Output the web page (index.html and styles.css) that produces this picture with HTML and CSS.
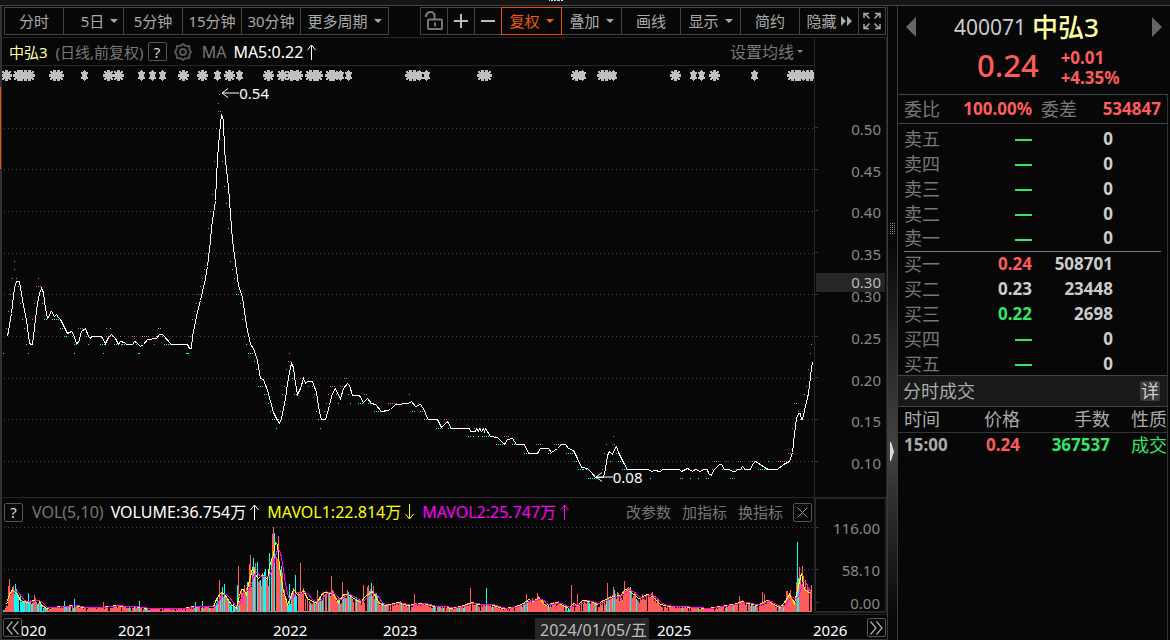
FILE: index.html
```html
<!DOCTYPE html>
<html lang="zh-CN">
<head>
<meta charset="utf-8">
<title>中弘3 400071</title>
<link rel="stylesheet" href="styles.css">
</head>
<body>
<div class="strip"><svg width="16" height="2" shape-rendering="crispEdges"><path d="M0 0h1v1h-1zM2 0h2v1h-2zM5 0h2v1h-2zM8 0h3v1h-3zM12 0h2v1h-2z" fill="#ddd"/></svg></div>
<div class="app">
  <main class="main">
    <nav class="toolbar">
      <div class="group">
        <button class="tool">分时</button>
        <button class="tool drop day">5日</button>
        <button class="tool">5分钟</button>
        <button class="tool">15分钟</button>
        <button class="tool">30分钟</button>
        <button class="tool drop wide">更多周期</button>
      </div>
      <div class="group">
        <button class="tool icon" aria-label="解锁"><svg width="20" height="20" viewBox="0 0 20 20" fill="none" stroke="#777" stroke-width="2"><path d="M2 6a4.500 4.500 0 0 1 8.500-2.500V8"/><rect x="4" y="8.500" width="14" height="9.500" rx="1"/><path d="M11 11.500v4"/></svg></button>
        <button class="tool icon" aria-label="放大"><svg width="14" height="14" viewBox="0 0 14 14" fill="none" stroke="#bbb" stroke-width="2"><path d="M0 7h14M7 0v14"/></svg></button>
        <button class="tool icon" aria-label="缩小"><svg width="14" height="14" viewBox="0 0 14 14" fill="none" stroke="#bbb" stroke-width="2"><path d="M0 7h14"/></svg></button>
        <button class="tool drop active">复权</button>
        <button class="tool drop">叠加</button>
        <button class="tool">画线</button>
        <button class="tool drop">显示</button>
        <button class="tool">简约</button>
        <button class="tool hide">隐藏<svg width="11" height="10" viewBox="0 0 11 10" fill="#aaa"><path d="M0 0l5 5-5 5zM6 0l5 5-5 5z"/></svg></button>
        <button class="tool icon" aria-label="全屏"><svg width="18" height="18" viewBox="0 0 18 18" fill="none" stroke="#aaa" stroke-width="1.500"><path d="M1 6V1.500h5M1.500 1.500l5 5M12 1.500h5V6M16.500 1.500l-5 5M1 12v4.500h5M1.500 16.500l5-5M12 16.500h5V12M16.500 16.500l-5-5"/></svg></button>
      </div>
    </nav>
    <div class="panes">
      <section class="pane">
        <header class="head">
          <span class="stock">中弘3</span>
          <span class="muted">(日线,前复权)</span>
          <button class="box" aria-label="帮助">?</button>
          <svg class="gear" width="18" height="18" viewBox="0 0 18 18" fill="none" stroke="#555" stroke-width="2"><path d="M9 1l2.500 1.800 3.500.2.500 3.500L17 9l-1.500 2.500-.500 3.500-3.500.2L9 17l-2.500-1.800-3.500-.2-.500-3.500L1 9l1.500-2.500L3 3l3.500-.2z"/><circle cx="9" cy="9" r="3"/></svg>
          <span class="muted ma">MA</span>
          <span class="value">MA5:0.22<svg class="arrow" viewBox="0 0 9 16"><path d="M4.500 16V1M0.500 6l4-5 4 5"/></svg></span>
          <button class="setting">设置均线<i></i></button>
        </header>
        <div class="plot">
          <svg id="price" viewBox="2 66 812 431" preserveAspectRatio="none" shape-rendering="crispEdges">
            <defs>
              <path id="star" d="M-3-3h2v-2h2v2h2v-1h1v1h-1v2h2v2h-2v2h1v1h-1v-1h-2v2h-2v-2h-2v1h-1v-1h1v-2h-2v-2h2v-2h-1v-1h1z"/>
              <path id="bolt" d="M0-5h1v1h1v1h2v2h-1v3h1v2h-2v1h-1v1h-1v-1h-1v-1h-2v-2h1v-3h-1v-2h2v-1h1z"/>
            </defs>
          </svg>
          <span class="note high"><svg width="18" height="10" viewBox="0 0 18 10"><path d="M18 5H1M7 0.500L1 5l6 4.500"/></svg>0.54</span>
          <span class="note low"><svg width="18" height="10" viewBox="0 0 18 10"><path d="M18 5H1M7 0.500L1 5l6 4.500"/></svg>0.08</span>
        </div>
      </section>
      <aside class="scale prices">
        <span>0.50</span><span>0.45</span><span>0.40</span><span>0.35</span><span>0.30</span><span>0.25</span><span>0.20</span><span>0.15</span><span>0.10</span>
        <b class="cursor">0.30</b>
      </aside>
      <section class="pane vol">
        <header class="head">
          <button class="box" aria-label="帮助">?</button>
          <span class="muted">VOL(5,10)</span>
          <span class="value">VOLUME:36.754万<svg class="arrow" viewBox="0 0 9 16"><path d="M4.500 16V1M0.500 6l4-5 4 5"/></svg></span>
          <span class="value yellow">MAVOL1:22.814万<svg class="arrow" viewBox="0 0 9 16"><path d="M4.500 0v15M0.500 10l4 5 4-5"/></svg></span>
          <span class="value magenta">MAVOL2:25.747万<svg class="arrow" viewBox="0 0 9 16"><path d="M4.500 16V1M0.500 6l4-5 4 5"/></svg></span>
          <span class="links"><button>改参数</button><button>加指标</button><button>换指标</button></span>
          <button class="box" aria-label="关闭"><svg width="11" height="11" viewBox="0 0 11 11" stroke="#999"><path d="M0.500 0.500l10 10M10.500 0.500l-10 10"/></svg></button>
        </header>
        <div class="plot"><svg id="volume" viewBox="2 526 812 86" preserveAspectRatio="none" shape-rendering="crispEdges"></svg></div>
      </section>
      <aside class="scale volumes"><span>116.00</span><span>58.10</span><span>0.00</span></aside>
    </div>
    <footer class="timeline">
      <button class="box" aria-label="向前"><svg width="13" height="14" viewBox="0 0 13 14" fill="none" stroke="#aaa" stroke-width="1.300"><path d="M6.500 0.500L1 7l5.500 6.500M12.500 0.500L7 7l5.500 6.500"/></svg></button>
      <div class="years"><span class="first">2020</span><span>2021</span><span>2022</span><span>2023</span><span><b class="date">2024/01/05/五</b></span><span>2025</span><span>2026</span></div>
      <button class="box" aria-label="向后"><svg width="13" height="14" viewBox="0 0 13 14" fill="none" stroke="#aaa" stroke-width="1.300"><path d="M0.500 0.500L6 7l-5.500 6.500M6.500 0.500L12 7l-5.500 6.500"/></svg></button>
    </footer>
  </main>
  <div class="splitter">
    <svg class="grip" width="6" height="11" shape-rendering="crispEdges" fill="#888"><path d="M0 0h1v1H0zM2 0h1v1H2zM4 0h1v1H4zM0 2h1v1H0zM2 2h1v1H2zM4 2h1v1H4zM0 4h1v1H0zM2 4h1v1H2zM4 4h1v1H4zM0 6h1v1H0zM2 6h1v1H2zM4 6h1v1H4zM0 8h1v1H0zM2 8h1v1H2zM4 8h1v1H4zM0 10h1v1H0zM2 10h1v1H2zM4 10h1v1H4z"/></svg>
    <svg class="fold" width="4" height="19" fill="#ddd"><path d="M0 0l1 0 3 9.500-3 9.500H0z"/></svg>
  </div>
  <section class="quote">
    <header class="summary">
      <button class="nav" aria-label="上一只"><svg width="10" height="20" fill="#666"><path d="M10 0v20L0 10z"/></svg></button>
      <div class="ident">
        <h1><span class="code">400071</span> <span class="name">中弘3</span></h1>
        <div class="last"><strong>0.24</strong><p>+0.01<br>+4.35%</p></div>
      </div>
      <button class="nav" aria-label="下一只"><svg width="10" height="20" fill="#666"><path d="M0 0v20L10 10z"/></svg></button>
    </header>
    <div class="body">
      <dl class="ratio"><dt>委比</dt><dd>100.00%</dd><dt>委差</dt><dd>534847</dd></dl>
      <table class="book">
        <tbody>
          <tr><th>卖五</th><td class="down"><i></i></td><td>0</td></tr>
          <tr><th>卖四</th><td class="down"><i></i></td><td>0</td></tr>
          <tr><th>卖三</th><td class="down"><i></i></td><td>0</td></tr>
          <tr><th>卖二</th><td class="down"><i></i></td><td>0</td></tr>
          <tr><th>卖一</th><td class="down"><i></i></td><td>0</td></tr>
        </tbody>
        <tbody class="buy">
          <tr><th>买一</th><td class="up">0.24</td><td>508701</td></tr>
          <tr><th>买二</th><td>0.23</td><td>23448</td></tr>
          <tr><th>买三</th><td class="down">0.22</td><td>2698</td></tr>
          <tr><th>买四</th><td class="down"><i></i></td><td>0</td></tr>
          <tr><th>买五</th><td class="down"><i></i></td><td>0</td></tr>
        </tbody>
      </table>
      <div class="ticktitle"><span>分时成交</span><button>详</button></div>
      <table class="ticks">
        <thead><tr><th>时间</th><th>价格</th><th>手数</th><th>性质</th></tr></thead>
        <tbody><tr><td>15:00</td><td class="up">0.24</td><td class="down">367537</td><td class="down kind">成交</td></tr></tbody>
      </table>
    </div>
  </section>
</div>
<script src="chart.js"></script>
</body>
</html>
```
FILE: styles.css
```css
* { box-sizing: border-box; }
body {
  margin: 0; min-height: 100vh; display: flex; flex-direction: column;
  background: #070707; color: #aaa;
  font: 15px/20px "Noto Sans", "Noto Sans CJK SC", sans-serif;
}
button { background: none; border: 0; padding: 0; margin: 0; color: inherit; font: inherit; white-space: nowrap; }
svg { display: block; flex: none; }
h1, p, dl, dd { margin: 0; font-weight: 400; }
table { border-collapse: collapse; width: 100%; table-layout: fixed; }
th, td { padding: 0; }

.strip { height: 6px; background: #151515; border-bottom: 1px solid #444; padding-left: 549px; }
.app { flex: 1; display: flex; }
.main { flex: 1; min-width: 0; display: flex; flex-direction: column; border-left: 2px solid #333; position: relative; }
.main::before { content: ""; position: absolute; left: -2px; top: 81px; width: 1px; height: 82px; background: #e8500c; }

.toolbar { display: flex; justify-content: space-between; padding: 1px 1px 2px 2px; height: 31px; }
.group { display: flex; }
.tool { width: 60px; height: 28px; border: 1px solid #444; margin-right: -1px; display: flex; align-items: center; justify-content: center; gap: 6px; }
.group .tool:last-child { margin-right: 0; }
.tool.icon { width: 28px; }
.tool.wide { width: 89px; }
.tool.drop:not(.wide) { width: 61px; }
.tool.drop::after { content: ""; border: 4px solid transparent; border-top-color: currentColor; border-bottom: 0; }
.tool.day { padding-left: 12px; }
.tool.active { border-color: #e8500c; color: #f25a10; position: relative; }
.tool.hide { gap: 4px; }

.panes { flex: 1; display: grid; grid-template-columns: 1fr 73px; grid-template-rows: 459px 116px; border-top: 1px solid #262626; border-bottom: 1px solid #262626; }
.pane { display: flex; flex-direction: column; min-width: 0; }
.head { display: flex; align-items: center; height: 27px; padding: 0 11px 0 7px; white-space: nowrap; }
.stock { color: #ffffa0; margin-right: 8px; }
.muted { color: #777; }
.box { width: 19px; height: 19px; border: 1px solid #555; border-radius: 2px; color: #ddd; display: flex; align-items: center; justify-content: center; flex: none; }
.head .box { margin-left: 4px; }
.gear { margin: 0 10px 0 7px; }
.ma { margin-right: 7px; font-size: 16px; }
.value { color: #fff; display: flex; align-items: center; font-size: 16px; }
.arrow { width: 9px; height: 16px; margin-left: 4px; fill: none; stroke: currentColor; }
.setting { margin-left: auto; color: #777; display: flex; align-items: center; gap: 3px; font-size: 16px; }
.setting i { border: 3px solid transparent; border-top-color: #888; border-bottom: 0; }
.plot { flex: 1; min-height: 0; position: relative; border-top: 1px solid #262626; }
.plot > svg { width: 100%; height: 100%; }
.note { position: absolute; display: flex; align-items: center; color: #fff; }
.note svg { fill: none; stroke: #fff; }
.high { left: 27%; top: 4%; }
.low { left: 73%; top: 93%; }

.vol { border-top: 1px solid #262626; }
.vol .plot { border-top: 0; padding-bottom: 1px; }
.vol .head { height: 28px; padding: 0 2px; }
.vol .head .box { margin: 0; }
.vol .muted { margin: 0 7px 0 9px; font-size: 16px; }
.vol .value { margin-right: 8px; }
.vol .value.yellow { color: #ff0; }
.vol .value.magenta { color: #f0f; }
.links { display: flex; gap: 11px; margin: 0 10px 0 auto; color: #777; }

.scale { border: 1px solid #262626; border-width: 0 1px 0 1px; display: flex; flex-direction: column; color: #888; text-align: right; position: relative; }
.scale span { padding-right: 5px; position: relative; }
.prices { padding: 70px 0 13px; }
.prices span { flex: 1; display: flex; align-items: center; justify-content: flex-end; }
.scale span::before { content: ""; position: absolute; left: 0; top: 45%; width: 3px; height: 1px; background: #333; }
.cursor { position: absolute; left: 1px; right: 1px; top: 235px; height: 19px; line-height: 19px; padding-right: 4px; background: #262626; color: #bbb; font-weight: 400; }
.volumes { border-width: 2px; padding: 19px 0 0; gap: 22px; }
.volumes span:last-child { margin-top: -9px; }

.timeline { display: flex; height: 25px; padding: 3px 1px 2px; border-bottom: 1px solid #333; color: #fff; }
.timeline .box { position: relative; z-index: 1; background: #070707; }
.years { flex: 1; min-width: 0; display: grid; grid-template-columns: 96fr 155fr 110fr 152fr 122fr 156fr 54fr; line-height: 24px; height: 21px; }
.years .first { margin-left: -10px; }
.date { display: block; width: 114px; height: 21px; padding-left: 5px; background: #262626; color: #bbb; font-weight: 400; font-size: 16px; white-space: nowrap; }

.splitter { width: 11px; border: 1px solid #3a3a3a; border-width: 0 1px; background: linear-gradient(#070707 37%, #444 70%, #333 76%, #0a0a0a 96%); display: flex; flex-direction: column; padding-left: 2px; padding-top: 217px; gap: 208px; }

.quote { width: 272px; display: flex; flex-direction: column; }
.summary { display: flex; justify-content: space-between; align-items: flex-start; height: 88px; padding: 10px 8px 0; }
.summary .nav { margin-top: 1px; }
.ident { flex: 1; padding-left: 38px; }
.ident h1 { font-size: 21px; line-height: 22px; color: #ccc; display: flex; align-items: center; gap: 6px; }
.name { font-size: 26px; color: #ffffa0; font-weight: 500; }
.last { display: flex; gap: 22px; padding-left: 23px; color: #ff5c5c; }
.last strong { font-size: 31px; line-height: 54px; font-weight: 500; }
.last p { font-size: 17px; line-height: 20px; font-weight: 700; padding-top: 10px; }
.body { flex: 1; margin-right: 2px; border-top: 1px solid #444; border-right: 1px solid #333; font-size: 18px; }
.ratio { display: grid; grid-template-columns: 36px 92px 36px 1fr; column-gap: 0; height: 29px; padding: 0 6px; align-items: center; border-bottom: 1px solid #444; color: #777; }
.ratio dt:nth-of-type(2) { margin: 0 -9px 0 9px; }
.ratio dd { text-align: right; font-size: 17px; font-weight: 700; color: #ff5c5c; }
.book { width: auto; margin: 2px 6px -1px; min-width: 257px; }
.book tr { height: 25px; }
.book th { width: 40px; text-align: left; font-weight: 400; color: #777; line-height: 24px; }
.book td { width: 88px; text-align: right; font-size: 17px; font-weight: 700; color: #ccc; line-height: 24px; }
.book td:last-child { width: auto; padding-right: 48px; }
.book .buy { border-top: 1px solid #777; }
.book i { display: inline-block; width: 17px; height: 2px; background: currentColor; vertical-align: middle; }
.book .up, .ticks .up { color: #ff5c5c; }
.book .down, .ticks .down { color: #33e666; }
.ticktitle { display: flex; justify-content: space-between; align-items: center; height: 32px; padding: 0 7px 0 5px; background: #191919; border: 1px solid #444; border-width: 1px 0; }
.ticktitle button { width: 20px; height: 20px; background: #3a3a3a; border-radius: 2px; color: #ccc; }
.ticks th { font-weight: 400; text-align: right; height: 25px; line-height: 24px; }
.ticks thead { border-bottom: 1px solid #333; }
.ticks td { font-size: 17px; font-weight: 700; text-align: right; height: 25px; }
.ticks th:first-child, .ticks td:first-child { text-align: left; padding-left: 6px; width: 62px; }
.ticks th:nth-child(2) { width: 60px; }
.ticks th:nth-child(3) { width: 90px; }
.ticks .kind { font-size: 18px; font-weight: 400; }
```
FILE: chart.js
```js
const NS = "http://www.w3.org/2000/svg";
const price = document.getElementById("price");
const volume = document.getElementById("volume");

function add(parent, tag, attrs) {
  const el = document.createElementNS(NS, tag);
  for (const key in attrs) el.setAttribute(key, attrs[key]);
  parent.appendChild(el);
}
function grid(parent, ys) {
  for (const y of ys) {
    add(parent, "path", { d: `M4 ${y + 0.5}H814`, stroke: "#444", "stroke-dasharray": "1 3", fill: "none" });
  }
}
function interpolate(points, x) {
  for (let i = 1; i < points.length; i++) {
    const [x0, y0] = points[i - 1], [x1, y1] = points[i];
    if (x <= x1) return y0 + (y1 - y0) * Math.max(0, x - x0) / (x1 - x0);
  }
  return points[points.length - 1][1];
}
const parse = text => text.trim().split(/\s+/).map(pair => pair.split(",").map(Number));

/* average price line */
const line = parse(`7,336 11,313 14,287 16,281 19,281 21,293 23,305 26,320 29,342 30,344 32,344 34,327 37,303 39,293
41,288 43,292 45,308 47,318 51,311 54,316 56,314 58,317 60,319 64,327 67,333 71,331 73,334 76,343 78,342 81,331 85,328 88,336 90,338 91,336 101,336
105,343 108,337 111,334 115,338 118,344 120,341 124,342 126,344 132,344 134,341 136,342 140,346 143,344 147,339 156,338 159,334 162,334 171,344
187,344 189,348 191,348 192,336 197,311 200,300 205,278 207,266 210,240 211,227 215,200 217,157 220,123 221,114 223,120 224,150
228,187 232,240 238,285 242,297 246,325 250,344 253,348 257,360 260,378 263,379 267,390 273,412 277,420 279,423 281,418 285,398 287,383
290,367 291,363 293,367 295,383 297,394 300,388 303,378 305,383 307,381 312,381 316,392 319,412 321,419 325,419 329,405 332,393 335,388 337,393 340,398
343,388 347,383 349,385 352,395 359,395 363,402 367,398 371,403 375,404 381,411 387,410 390,409 395,404 408,403 411,401 415,406 420,404 424,410
426,416 428,419 437,419 441,427 447,421 451,428 469,428 470,431 475,431 476,428 478,431 479,428 481,431 483,428 484,431 485,428 490,436 497,437 504,444 507,439
512,438 516,444 524,444 528,453 537,453 540,448 548,448 551,452 557,448 561,444 565,444 568,448 573,450 577,458 581,467 587,468 591,472
595,477 603,477 605,468 607,455 609,451 612,454 615,447 616,446 618,452 623,462 627,469 648,469 651,471 654,470 660,471 662,469
679,469 681,471 687,468 689,469 692,471 695,469 700,471 703,469 707,469 708,473 711,475 713,470 716,467 719,464 721,464 724,469 729,469 732,471 735,471 737,469
740,469 742,466 745,469 750,469 752,464 755,461 758,463 760,464 764,467 768,469 777,469 783,464 789,461 792,452 794,433 796,418 798,413 800,413 801,419
802,419 804,410 808,393 810,377 811,367 812,362`);

grid(price, [128, 169, 211, 253, 294, 336, 378, 419, 461]);
const snap = y => Math.round(461 + Math.round((y - 461) / 8.33) * 8.33);
for (let x = 5; x < 811; x++) {
  const before = interpolate(line, x - 2), after = interpolate(line, x + 2);
  const slope = after - before;
  if (Math.abs(slope) < 1 ? x % 11 !== 0 : x % 2 !== 0) continue;
  const push = Math.max(3, Math.abs(slope) / 3);
  const y = snap(after + (slope > 1 ? push : slope < -1 ? -push : x % 3 ? 4 : -4));
  add(price, "rect", { x, y, width: 1, height: 1, fill: slope < 0 || (Math.abs(slope) < 1 && y < after) ? "#ff5c5c" : "#00ffff" });
}
parse("14,261 38,278 106,328 110,328 158,328 219,94 218,111 289,353 409,394 613,436 811,344 810,353 796,403").forEach(([x, y]) =>
  add(price, "rect", { x, y, width: 1, height: 1, fill: "#ff5c5c" }));
parse("3,353 28,353 74,353 103,353 139,353 187,353 276,428 220,111").forEach(([x, y]) =>
  add(price, "rect", { x, y, width: 1, height: 1, fill: "#00ffff" }));
add(price, "polyline", { points: line.map(([x, y]) => `${x + 0.5},${y + 0.5}`).join(" "), fill: "none", stroke: "#fff" });

/* event markers */
const stars = [6, 18, 21, 25, 29, 54, 58, 108, 118, 183, 202, 229, 268, 282, 291, 297, 310, 314, 317, 330, 333, 410, 414, 482, 486, 576, 602, 606, 675, 714, 792, 796, 799, 807, 811];
const bolts = [84, 141, 152, 162, 217, 239, 340, 348, 419, 426, 582, 613, 693, 701, 754, 803];
stars.forEach(x => add(price, "use", { href: "#star", x, y: 75, fill: "#c0c0c0", stroke: "#c0c0c0" }));
bolts.forEach(x => add(price, "use", { href: "#bolt", x, y: 75, fill: "#c0c0c0" }));

/* volume, its bars and two averages, as heights above the base line */
const BASE = 612;
const average = parse(`3,2 6,7 9,17 12,22 14,20 17,17 20,11 27,9 33,11 38,11 42,5 47,3 50,4 75,6 82,4 100,4 110,5 115,6 123,5 133,5 147,3 183,3 193,5 213,5
217,14 221,19 225,16 230,8 236,3 238,12 241,22 243,22 246,17 248,27 252,43 255,37 258,33 262,37 267,32 269,45 273,57 275,69 277,67 279,45 283,20
287,7 290,14 293,22 298,16 303,21 307,13 316,8 322,18 325,19 332,18 338,9 343,17 348,17 355,12 360,9 366,16 372,20 376,13 379,8 385,6 390,7 398,9 407,6
423,8 433,5 445,5 450,3 460,5 472,9 477,7 490,7 502,3 513,4 523,8 528,12 533,10 538,14 545,6 557,9 562,6 568,3 573,8 577,6 582,11 590,10 597,7 605,12
613,15 620,16 625,22 630,20 638,13 647,17 652,15 660,7 670,5 680,5 693,4 707,3 720,5 733,7 742,10 748,8 757,6 767,11 773,7 780,4 784,9 789,17 794,8
797,22 801,38 804,22 807,20 811,17`);
const spikes = { 8: 26, 9: 33, 15: -28, 28: -19, 34: 17, 64: -11, 74: -13, 103: 10, 139: -11, 195: -10, 202: -11, 219: 32, 224: -28, 237: -27, 238: 46, 247: -30,
  249: 48, 250: 57, 257: -50, 269: -59, 272: 78, 273: 85, 274: -79, 279: 47, 289: -28, 295: -37, 300: 49, 317: 22, 331: 36, 342: 30, 363: 27, 367: 25, 368: 27, 371: -29,
  376: -19, 414: 18, 470: 24, 486: -24, 526: 18, 537: 19, 571: 27, 577: 18, 607: 29, 613: 25, 614: -22, 624: 31, 739: 16, 762: 20, 764: 18, 786: 21, 787: 21,
  796: 30, 797: -70, 798: -34, 799: 45, 800: 35, 805: 32, 811: 27 };
const colder = [[14, 31, .75], [40, 46, .9], [216, 243, .6], [244, 268, .25], [269, 288, .3], [288, 297, .8], [300, 380, .25], [380, 600, .14], [600, 620, .3]];
let seed = 7;
const random = () => (seed = seed * 16807 % 2147483647) / 2147483647;

grid(volume, [527, 569]);
for (let x = 3; x < 812; x++) {
  const level = interpolate(average, x - 1);
  const share = (colder.find(([from, to]) => x >= from && x < to) || [0, 0, .08])[2];
  const cyan = random() < share, gap = random() < .07;
  let h = level * (.7 + random() * .6);
  if (gap) h = Math.min(h, 1);
  const spike = spikes[x];
  if (spike) h = Math.abs(spike);
  const blue = spike ? spike < 0 : cyan;
  h = Math.max(1, Math.round(h));
  add(volume, "rect", { x, y: BASE - h, width: 1, height: h, fill: blue ? "#00ffff" : "#ff5c5c" });
}
const fast = [], slow = [];
for (let x = 6; x < 812; x++) {
  fast.push(`${x + .5},${BASE - Math.round(interpolate(average, x)) - .5}`);
  if (x < 13) continue;
  let sum = 0;
  for (let k = 0; k < 7; k++) sum += interpolate(average, x - k);
  slow.push(`${x + .5},${BASE - Math.round(sum / 7) - .5}`);
}
add(volume, "polyline", { points: fast.join(" "), fill: "none", stroke: "#ffff00" });
add(volume, "polyline", { points: slow.join(" "), fill: "none", stroke: "#ff00ff" });
```
